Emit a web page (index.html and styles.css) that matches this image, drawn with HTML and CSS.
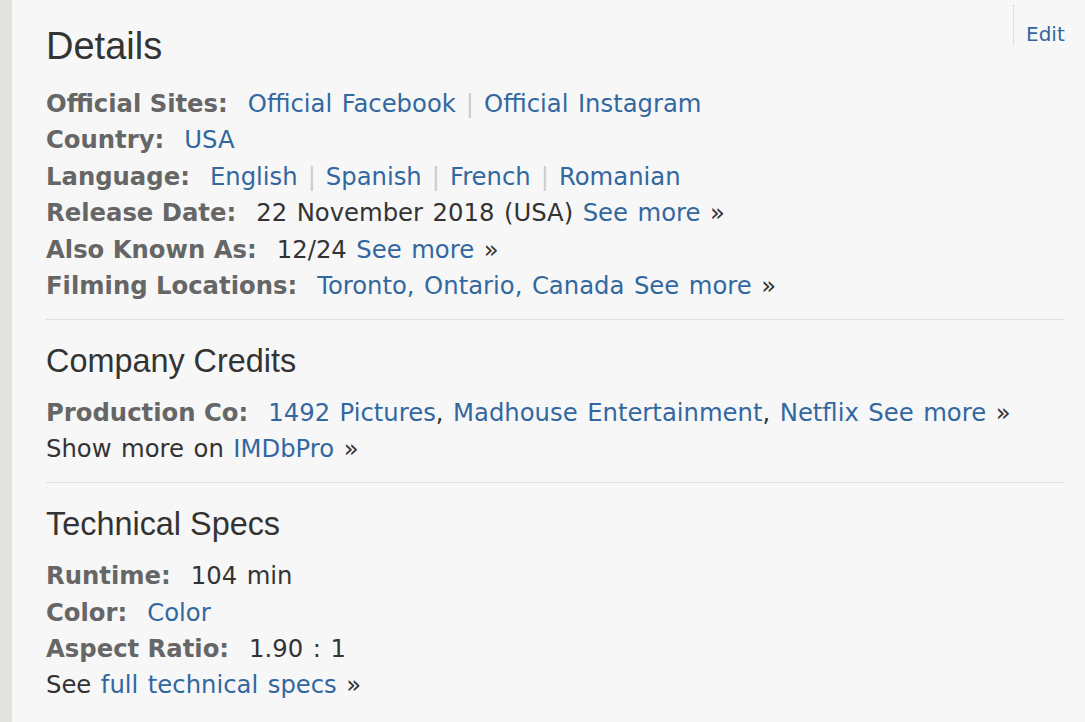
FILE: index.html
```html
<!DOCTYPE html>
<html>
<head>
<meta charset="utf-8">
<link rel="stylesheet" href="styles.css">
</head>
<body>
<div class="page">
  <div class="strip"></div>
  <main class="content">
    <div class="edit-wrap"><a class="edit" href="#">Edit</a></div>
    <section class="block">
      <h2 class="h2">Details</h2>
      <div class="row"><span class="label">Official Sites:</span> <a href="#">Official Facebook</a><span class="sep">|</span><a href="#">Official Instagram</a></div>
      <div class="row"><span class="label">Country:</span> <a href="#">USA</a></div>
      <div class="row"><span class="label">Language:</span> <a href="#">English</a><span class="sep">|</span><a href="#">Spanish</a><span class="sep">|</span><a href="#">French</a><span class="sep">|</span><a href="#">Romanian</a></div>
      <div class="row"><span class="label">Release Date:</span> 22 November 2018 (USA) <a href="#">See more</a>&nbsp;»</div>
      <div class="row"><span class="label">Also Known As:</span> 12/24 <a href="#">See more</a>&nbsp;»</div>
      <div class="row"><span class="label">Filming Locations:</span> <a href="#">Toronto, Ontario, Canada</a> <a href="#">See more</a>&nbsp;»</div>
    </section>
    <hr class="rule">
    <section class="block">
      <h3 class="h3">Company Credits</h3>
      <div class="row"><span class="label">Production Co:</span> <a href="#">1492 Pictures</a>, <a href="#">Madhouse Entertainment</a>, <a href="#">Netflix</a> <a href="#">See more</a>&nbsp;»</div>
      <div class="row">Show more on <a href="#">IMDbPro</a>&nbsp;»</div>
    </section>
    <hr class="rule">
    <section class="block">
      <h3 class="h3">Technical Specs</h3>
      <div class="row"><span class="label">Runtime:</span> 104 min</div>
      <div class="row"><span class="label">Color:</span> <a href="#">Color</a></div>
      <div class="row"><span class="label">Aspect Ratio:</span> 1.90 : 1</div>
      <div class="row">See <a href="#">full technical specs</a>&nbsp;»</div>
    </section>
  </main>
</div>
</body>
</html>
```
FILE: styles.css
```css
html, body {
  margin: 0;
  padding: 0;
  background: #f7f7f7;
}
.page {
  display: flex;
  min-height: 722px;
}
.strip {
  width: 12px;
  flex: none;
  background: #e3e2de;
}
.content {
  flex: 1;
  position: relative;
  padding: 24px 20px 0 34px;
  font-family: "DejaVu Sans", Verdana, sans-serif;
  font-size: 24.3px;
  color: #333;
}
a {
  color: #33679f;
  text-decoration: none;
}
.edit-wrap {
  position: absolute;
  top: 5px;
  right: 0;
  width: 72px;
  height: 40px;
  border-left: 1px dotted #c8c8c8;
  padding-left: 12px;
  box-sizing: border-box;
}
.edit {
  font-size: 20px;
  display: block;
  line-height: 1;
  margin-top: 19px;
}
.h2 {
  font-family: "Liberation Sans", Arial, sans-serif;
  font-weight: normal;
  font-size: 38px;
  line-height: 44px;
  margin: 0 0 18px;
  color: #333;
}
.h3 {
  font-family: "Liberation Sans", Arial, sans-serif;
  font-weight: normal;
  font-size: 32.4px;
  line-height: 38px;
  margin: 0 0 15px;
  color: #333;
}
.row {
  line-height: 36.4px;
  white-space: nowrap;
  word-spacing: 1.8px;
}
.label {
  font-weight: bold;
  color: #666;
  margin-right: 10.5px;
  word-spacing: 0;
}
.sep {
  color: #ccc;
  margin: 0 10px;
}
.rule {
  border: 0;
  border-top: 1px solid #e0e0e0;
  margin: 14.5px 0 22px;
  height: 0;
}
```
